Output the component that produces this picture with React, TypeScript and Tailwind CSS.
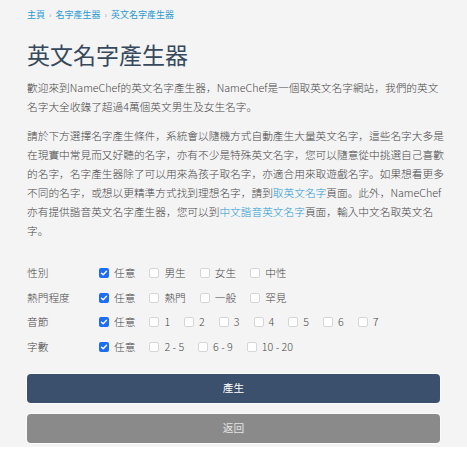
import React from "react";

const font = { fontFamily: '"Noto Sans CJK JP", "Noto Sans", sans-serif' };

function Box({ checked }: { checked?: boolean }) {
  if (checked) {
    return (
      <span className="flex h-[10px] w-[10px] shrink-0 items-center justify-center rounded-[2px] bg-[#1b6ef3]">
        <svg width="8" height="8" viewBox="0 0 8 8">
          <path d="M1.5 4.2 L3.2 5.8 L6.5 2.2" stroke="white" strokeWidth="1.4" fill="none" strokeLinecap="round" strokeLinejoin="round" />
        </svg>
      </span>
    );
  }
  return <span className="h-[10px] w-[10px] shrink-0 rounded-[2px] border border-[#d6d6d6] bg-white" />;
}

function Item({ label, checked }: { label: string; checked?: boolean }) {
  return (
    <div className="mr-[14px] flex items-center gap-[5px]">
      <Box checked={checked} />
      <span>{label}</span>
    </div>
  );
}

function Row({ label, items }: { label: string; items: string[] }) {
  return (
    <div className="flex h-[24.5px] items-center">
      <div className="w-[72px] shrink-0">{label}</div>
      <div className="flex items-center">
        <Item label="任意" checked />
        {items.map((i) => (
          <Item key={i} label={i} />
        ))}
      </div>
    </div>
  );
}

const Link = ({ children }: { children: React.ReactNode }) => (
  <span className="text-[#2a9ad2]">{children}</span>
);

export default function App() {
  return (
    <div style={font} className="h-[447px] overflow-hidden bg-[#f4f4f4] px-[27px] font-light text-[#484848]">
      <div className="flex h-[30px] items-center gap-[4px] text-[9px] font-normal text-[#2a9ad2]">
        <span>主頁</span>
        <span className="text-[8px] text-[#9a9a9a]">›</span>
        <span>名字產生器</span>
        <span className="text-[8px] text-[#9a9a9a]">›</span>
        <span>英文名字產生器</span>
      </div>
      <h1 className="h-[48px] text-[23px] font-normal leading-[48px] text-[#36495d]">英文名字產生器</h1>
      <div className="text-[10.7px] leading-[19px]">
        <div className="whitespace-nowrap">歡迎來到NameChef的英文名字產生器，NameChef是一個取英文名字網站，我們的英文</div>
        <div className="whitespace-nowrap">名字大全收錄了超過4萬個英文男生及女生名字。</div>
      </div>
      <div className="mt-[10px] text-[10.7px] leading-[19px]">
        <div className="whitespace-nowrap">請於下方選擇名字產生條件，系統會以隨機方式自動產生大量英文名字，這些名字大多是</div>
        <div className="whitespace-nowrap">在現實中常見而又好聽的名字，亦有不少是特殊英文名字，您可以隨意從中挑選自己喜歡</div>
        <div className="whitespace-nowrap">的名字，名字產生器除了可以用來為孩子取名字，亦適合用來取遊戲名字。如果想看更多</div>
        <div className="whitespace-nowrap">
          不同的名字，或想以更精準方式找到理想名字，請到<Link>取英文名字</Link>頁面。此外，NameChef
        </div>
        <div className="whitespace-nowrap">
          亦有提供諧音英文名字產生器，您可以到<Link>中文諧音英文名字</Link>頁面，輸入中文名取英文名
        </div>
        <div className="whitespace-nowrap">字。</div>
      </div>
      <div className="mt-[21px] text-[10.7px]">
        <Row label="性別" items={["男生", "女生", "中性"]} />
        <Row label="熱門程度" items={["熱門", "一般", "罕見"]} />
        <Row label="音節" items={["1", "2", "3", "4", "5", "6", "7"]} />
        <Row label="字數" items={["2 - 5", "6 - 9", "10 - 20"]} />
      </div>
      <button className="mt-[15px] flex h-[29px] w-full items-center justify-center rounded-[4px] bg-[#3b506c] text-[10.7px] font-normal text-white shadow-[0_0_0_1px_#fbfbfb]">
        產生
      </button>
      <button className="mt-[11px] flex h-[29px] w-full items-center justify-center rounded-[4px] bg-[#8a8a8a] text-[10.7px] font-normal text-[#e4e4e4] shadow-[0_0_0_1px_#fbfbfb]">
        返回
      </button>
    </div>
  );
}
